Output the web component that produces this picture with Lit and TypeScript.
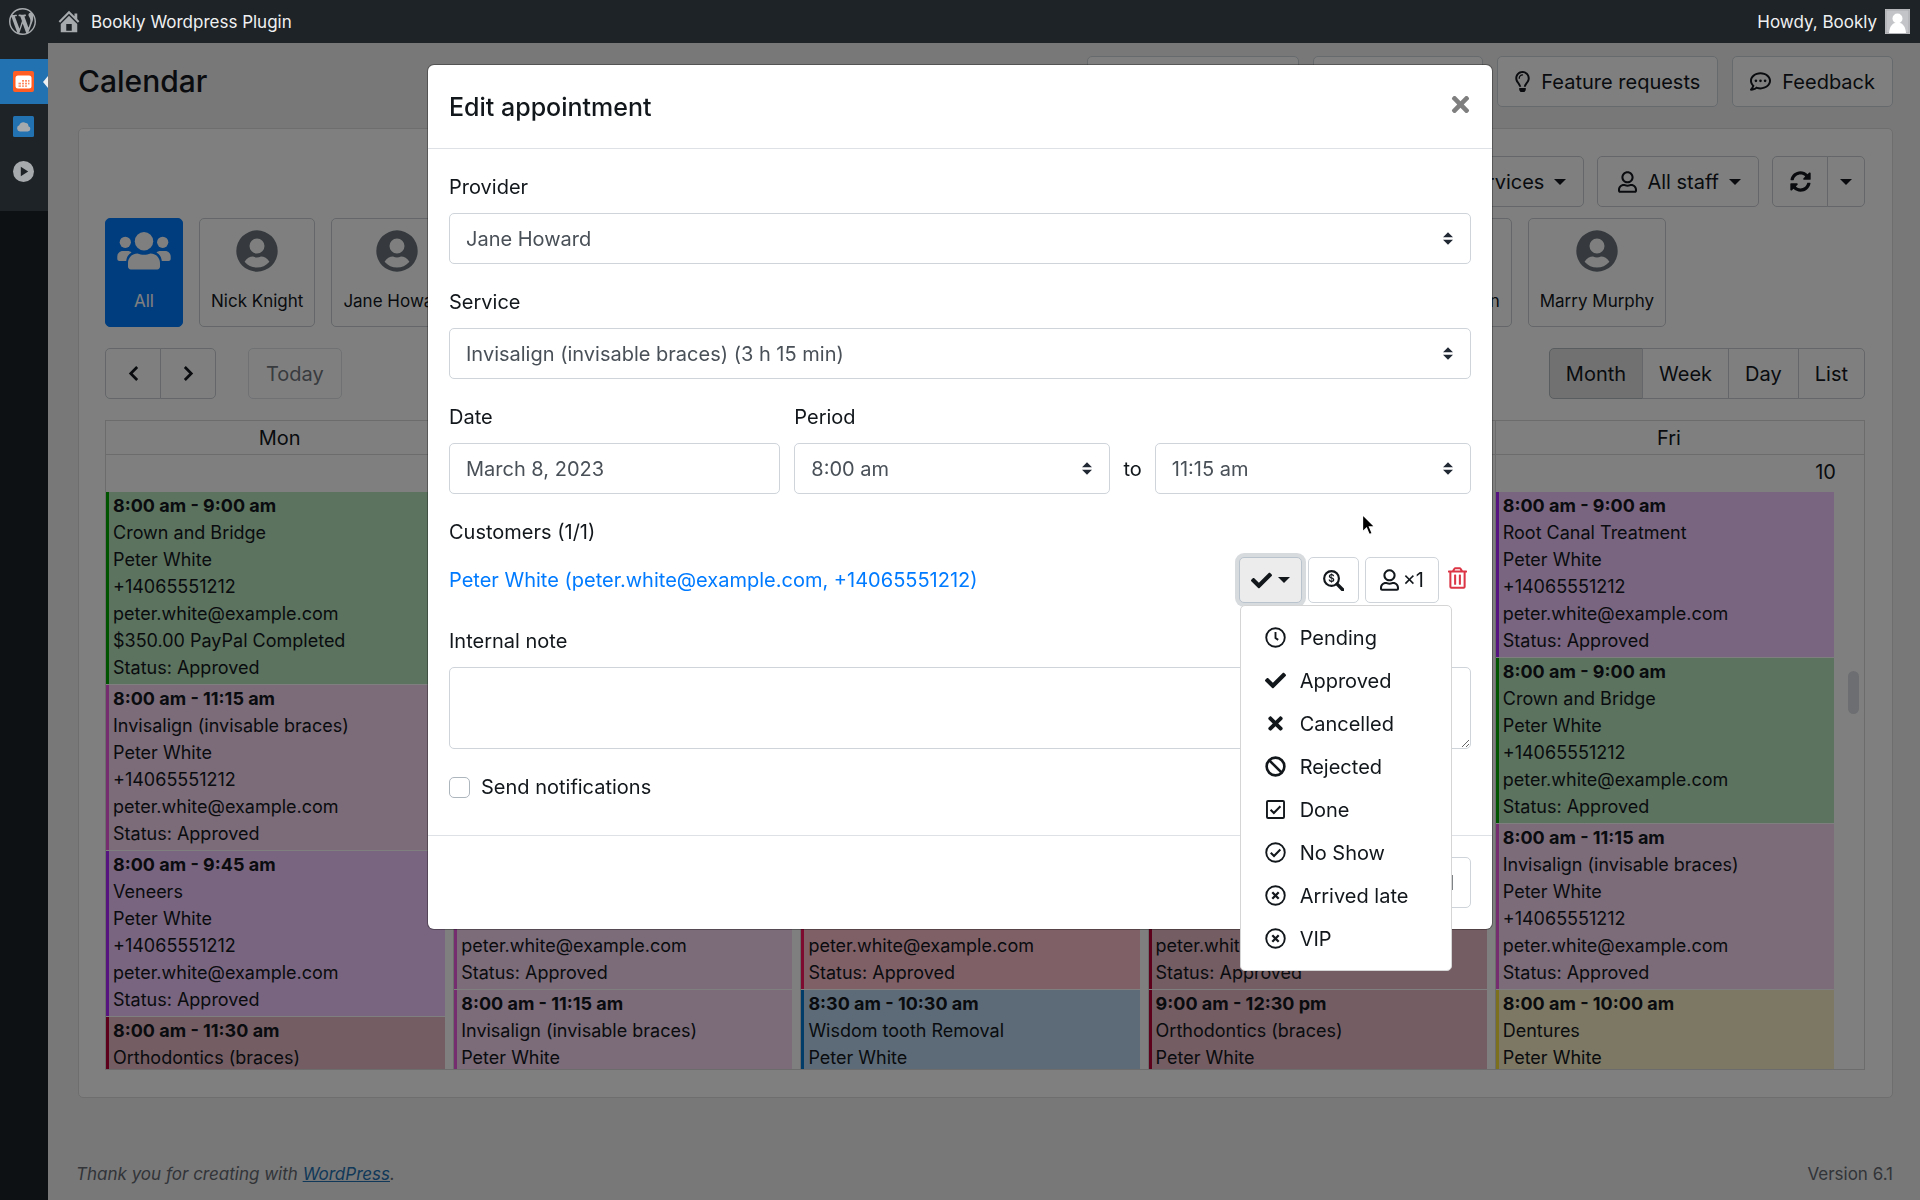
import { LitElement, html, css, svg, nothing, TemplateResult } from "lit";
import { customElement, state } from "lit/decorators.js";
import { classMap } from "lit/directives/class-map.js";

interface Appointment {
  time: string;
  service: string;
  tone: string;
  payment?: string;
}

interface Day {
  name: string;
  date: string;
  items: Appointment[];
}

const icon = (name: string, box: string, body: TemplateResult | unknown) =>
  html`<svg class="icon ${name}" viewBox=${box} aria-hidden="true">${body}</svg>`;

const checkPath = svg`<path d="M173.898 439.404l-166.4-166.4c-9.997-9.997-9.997-26.206 0-36.204l36.203-36.204c9.997-9.998 26.207-9.998 36.204 0L192 312.69 432.095 72.596c9.997-9.997 26.207-9.997 36.204 0l36.203 36.204c9.997 9.997 9.997 26.206 0 36.204l-294.4 294.401c-9.998 9.997-26.207 9.997-36.204-.001z"/>`;
const timesPath = svg`<path d="M242.72 256l100.07-100.07c12.28-12.28 12.28-32.19 0-44.48l-22.24-22.24c-12.28-12.28-32.19-12.28-44.48 0L176 189.28 75.93 89.21c-12.28-12.28-32.19-12.28-44.48 0L9.21 111.45c-12.28 12.28-12.28 32.19 0 44.48L109.28 256 9.21 356.07c-12.28 12.28-12.28 32.19 0 44.48l22.24 22.24c12.28 12.28 32.2 12.28 44.48 0L176 322.72l100.07 100.07c12.28 12.28 32.2 12.28 44.48 0l22.24-22.24c12.28-12.28 12.28-32.19 0-44.48L242.72 256z"/>`;
const userPath = svg`<path d="M313.6 304c-28.7 0-42.5 16-89.6 16-47.1 0-60.8-16-89.6-16C60.2 304 0 364.2 0 438.4V464c0 26.5 21.5 48 48 48h352c26.5 0 48-21.5 48-48v-25.6c0-74.2-60.2-134.4-134.4-134.4zM400 464H48v-25.6c0-47.6 38.8-86.4 86.4-86.4 14.6 0 38.3 16 89.6 16 51.7 0 74.9-16 89.6-16 47.6 0 86.4 38.8 86.4 86.4V464zM224 288c79.5 0 144-64.5 144-144S303.5 0 224 0 80 64.5 80 144s64.5 144 144 144zm0-240c52.9 0 96 43.1 96 96s-43.1 96-96 96-96-43.1-96-96 43.1-96 96-96z"/>`;
const ring = svg`<circle cx="256" cy="256" r="226" fill="none" stroke="currentColor" stroke-width="46"/>`;

const icons = {
  wordpress: () => icon("i-wp", "0 0 20 20", svg`<path d="M20 10c0-5.51-4.49-10-10-10C4.48 0 0 4.49 0 10c0 5.52 4.48 10 10 10 5.51 0 10-4.48 10-10zM7.78 15.37L4.37 6.22c.55-.02 1.17-.08 1.17-.08.5-.06.44-1.13-.06-1.11 0 0-1.45.11-2.37.11-.18 0-.37 0-.58-.01C4.12 2.69 6.87 1.11 10 1.11c2.33 0 4.45.87 6.05 2.34-.68-.11-1.65.39-1.65 1.58 0 .74.45 1.36.9 2.1.35.61.55 1.36.55 2.46 0 1.49-1.4 5-1.4 5l-3.03-8.37c.54-.02.82-.17.82-.17.5-.05.44-1.25-.06-1.22 0 0-1.44.12-2.38.12-.87 0-2.33-.12-2.33-.12-.5-.03-.56 1.2-.06 1.22l.92.08 1.26 3.41zM17.41 10c.24-.64.74-1.87.43-4.25.7 1.29 1.05 2.71 1.05 4.25 0 3.29-1.73 6.24-4.4 7.78.97-2.59 1.94-5.2 2.92-7.78zM6.1 18.09C3.12 16.65 1.11 13.53 1.11 10c0-1.3.23-2.48.72-3.59C3.25 10.3 4.67 14.2 6.1 18.09zm4.03-6.63l2.58 6.98c-.86.29-1.76.45-2.71.45-.79 0-1.57-.11-2.29-.33.81-2.38 1.62-4.74 2.42-7.1z"/>`),
  home: () => icon("i-home", "2 2 16 16.5", svg`<path fill-rule="evenodd" d="M16 8.5l1.53 1.53-1.06 1.06L10 4.6l-6.47 6.49-1.06-1.06L10 2.5l4 4v-2h2v4zm-6-2.46l6 5.99V18H4v-5.97zM12 17v-5H8v5h4z"/>`),
  avatar: () => icon("i-avatar", "0 0 25 25", svg`<rect width="25" height="25" fill="#c3c4c7"/><rect x="1" y="1" width="23" height="23" fill="none" stroke="#a7aaad"/><circle cx="12.500" cy="9.500" r="5" fill="#fff"/><path d="M4 24c.5-6.500 3.500-9.500 6-10h5c2.500.5 5.500 3.500 6 10z" fill="#fff"/>`),
  calendar: () => icon("i-tile", "0 0 21 21", svg`<rect width="21" height="21" rx="2" fill="#ff5d24"/><rect x="2.500" y="4.500" width="16" height="13" rx="2.500" fill="#fff"/><g fill="#ff8a63"><rect x="9" y="9" width="2" height="1.700"/><rect x="12" y="9" width="2" height="1.700"/><rect x="15" y="9" width="1.500" height="1.700"/><rect x="5.500" y="11.700" width="2.500" height="1.700"/><rect x="9" y="11.700" width="2" height="1.700"/><rect x="12" y="11.700" width="2" height="1.700"/><rect x="15" y="11.700" width="1.500" height="1.700"/><rect x="5.500" y="14.400" width="2.500" height="1.400"/><rect x="9" y="14.400" width="2" height="1.400"/><rect x="12" y="14.400" width="2" height="1.400"/></g>`),
  cloud: () => icon("i-tile", "0 0 21 21", svg`<rect width="21" height="21" rx="1.500" fill="#2271b1"/><path d="M7 15.500a3.200 3.200 0 0 1-.8-6.200A4.300 4.300 0 0 1 12.800 7a3 3 0 0 1 2.600 3.200 2.700 2.700 0 0 1-.6 5.300z" fill="#a7aaad"/>`),
  play: () => icon("i-tile", "0 0 21 21", svg`<circle cx="10.500" cy="10.500" r="10.500" fill="#a7aaad"/><path d="M7.800 5.800v9.400l7.400-4.700z" fill="#1d2327"/>`),
  bulb: () => icon("i-bulb", "0 0 352 512", svg`<path d="M176 80c-52.94 0-96 43.06-96 96 0 8.840 7.160 16 16 16s16-7.160 16-16c0-35.300 28.720-64 64-64 8.840 0 16-7.160 16-16s-7.160-16-16-16zM96.060 459.170c0 3.150.93 6.220 2.680 8.840l24.510 36.840c2.970 4.460 7.970 7.140 13.320 7.140h78.850c5.360 0 10.360-2.680 13.320-7.140l24.510-36.840c1.740-2.620 2.670-5.700 2.680-8.840l.05-43.180H96.020l.04 43.180zM176 0C73.720 0 0 82.970 0 176c0 44.370 16.450 84.850 43.560 115.780 16.640 18.990 42.740 58.800 52.420 92.160v.06h48v-.12c-.01-4.770-.72-9.510-2.150-14.070-5.590-17.810-22.820-64.770-62.170-109.670-20.540-23.430-31.520-53.150-31.610-84.140-.2-73.640 59.670-128 127.950-128 70.580 0 128 57.420 128 128 0 30.970-11.240 60.850-31.650 84.140-39.110 44.610-56.420 91.470-62.100 109.460a47.507 47.507 0 0 0-2.220 14.300v.1h48v-.05c9.680-33.370 35.780-73.180 52.420-92.160C335.550 260.850 352 220.370 352 176 352 78.800 273.200 0 176 0z"/>`),
  comment: () => icon("i-21", "0 0 512 512", svg`<circle cx="144" cy="240" r="32"/><circle cx="256" cy="240" r="32"/><circle cx="368" cy="240" r="32"/><path d="M256 32C114.600 32 0 125.100 0 240c0 47.600 19.900 91.200 52.900 126.300C38 405.700 7 439.100 6.500 439.500c-6.600 7-8.400 17.200-4.600 26S14.400 480 24 480c61.500 0 110-25.700 139.100-46.300C192 442.800 223.200 448 256 448c141.400 0 256-93.100 256-208S397.400 32 256 32zm0 368c-26.700 0-53.100-4.100-78.400-12.100l-22.700-7.200-19.500 13.800c-14.300 10.100-33.900 21.400-57.500 29 7.300-12.100 14.400-25.700 19.900-40.200l10.600-28.100-20.600-21.800C69.700 314.100 48 282.200 48 240c0-88.200 93.300-160 208-160s208 71.800 208 160-93.300 160-208 160z"/>`),
  user: () => icon("i-user", "0 0 448 512", userPath),
  sync: () => icon("i-21", "0 0 512 512", svg`<path d="M370.720 133.280C339.458 104.008 298.888 87.962 255.848 88c-77.458.068-144.328 53.178-162.791 126.850-1.344 5.363-6.122 9.150-11.651 9.150H24.103c-7.498 0-13.194-6.807-11.807-14.176C33.933 94.924 134.813 8 256 8c66.448 0 126.791 26.136 171.315 68.685L463.030 40.970C478.149 25.851 504 36.559 504 57.941V192c0 13.255-10.745 24-24 24H345.941c-21.382 0-32.090-25.851-16.971-40.971l41.750-41.749zM32 296h134.059c21.382 0 32.090 25.851 16.971 40.971l-41.750 41.750c31.262 29.273 71.835 45.319 114.876 45.280 77.418-.07 144.315-53.144 162.787-126.849 1.344-5.363 6.122-9.150 11.651-9.150h57.304c7.498 0 13.194 6.807 11.807 14.176C478.067 417.076 377.187 504 256 504c-66.448 0-126.791-26.136-171.315-68.685L48.970 471.030C33.851 486.149 8 475.441 8 454.059V320c0-13.255 10.745-24 24-24z"/>`),
  people: () => icon("i-people", "0 0 54 38", svg`<circle cx="27" cy="9.300" r="9.200"/><circle cx="8.300" cy="10.300" r="5.600"/><circle cx="45.700" cy="10.300" r="5.600"/><path d="M11 34.500V31c0-5.200 4.200-9.500 9.400-9.500 2.300 1 4.300 1.300 6.600 1.300s4.300-.3 6.600-1.300c5.200 0 9.400 4.300 9.400 9.500v3.500c0 1.600-1.200 2.900-2.800 2.900H13.800c-1.600 0-2.800-1.300-2.800-2.900z"/><path d="M.3 27v-2.500c0-3 2.500-5.500 5.500-5.500h5c1.400 0 2.700.6 3.700 1.400-3 1.600-4.900 4.600-5.300 8.600H2.500c-1.200 0-2.200-.9-2.200-2z"/><path transform="matrix(-1 0 0 1 54 0)" d="M.3 27v-2.500c0-3 2.500-5.500 5.500-5.500h5c1.400 0 2.700.6 3.700 1.400-3 1.600-4.900 4.600-5.300 8.600H2.500c-1.200 0-2.200-.9-2.200-2z"/>`),
  person: () => icon("i-person", "0 0 42 42", svg`<path fill-rule="evenodd" d="M21 .3a20.700 20.700 0 1 0 0 41.400 20.700 20.700 0 0 0 0-41.400zM21 8.500a7.500 7.500 0 1 1 0 15 7.500 7.500 0 0 1 0-15zM8.600 31.700C10.500 28.300 14 26.500 17 26.500c2.700 1.200 5.300 1.200 8 0 3 0 6.500 1.800 8.400 5.200C30 35.600 25.700 37.600 21 37.600s-9-2-12.400-5.900z"/>`),
  left: () => icon("i-chevron", "0 0 12 18", svg`<path d="M10 2L3 9l7 7" fill="none" stroke="currentColor" stroke-width="3"/>`),
  right: () => icon("i-chevron", "0 0 12 18", svg`<path d="M2 2l7 7-7 7" fill="none" stroke="currentColor" stroke-width="3"/>`),
  check: () => icon("i-21", "0 0 512 512", checkPath),
  times: () => icon("i-21", "-80 0 512 512", timesPath),
  clock: () => icon("i-21", "0 0 512 512", svg`${ring}<path d="M256 120v146l66 48" fill="none" stroke="currentColor" stroke-width="46"/>`),
  ban: () => icon("i-21", "0 0 512 512", svg`<circle cx="256" cy="256" r="216" fill="none" stroke="currentColor" stroke-width="64"/><path d="M105 105l302 302" fill="none" stroke="currentColor" stroke-width="64"/>`),
  checkSquare: () => icon("i-21", "0 0 512 512", svg`<rect x="48" y="48" width="416" height="416" rx="26" fill="none" stroke="currentColor" stroke-width="46"/><path d="M136 262l80 80 160-164" fill="none" stroke="currentColor" stroke-width="50"/>`),
  checkCircle: () => icon("i-21", "0 0 512 512", svg`${ring}<path d="M140 262l80 80 154-158" fill="none" stroke="currentColor" stroke-width="50"/>`),
  timesCircle: () => icon("i-21", "0 0 512 512", svg`${ring}<path d="M178 178l156 156M334 178L178 334" fill="none" stroke="currentColor" stroke-width="56"/>`),
  searchDollar: () => icon("i-21", "0 0 512 512", svg`<circle cx="208" cy="208" r="180" fill="none" stroke="currentColor" stroke-width="52"/><path d="M345 345l135 135" stroke="currentColor" stroke-width="84" stroke-linecap="round"/><text x="208" y="292" class="coin" text-anchor="middle">$</text>`),
  trash: () => icon("i-trash", "0 0 448 512", svg`<path d="M268 416h24a12 12 0 0 0 12-12V188a12 12 0 0 0-12-12h-24a12 12 0 0 0-12 12v216a12 12 0 0 0 12 12zM432 80h-82.410l-34-56.700A48 48 0 0 0 274.410 0H173.590a48 48 0 0 0-41.160 23.300L98.410 80H16A16 16 0 0 0 0 96v16a16 16 0 0 0 16 16h16v336a48 48 0 0 0 48 48h288a48 48 0 0 0 48-48V128h16a16 16 0 0 0 16-16V96a16 16 0 0 0-16-16zM171.840 50.910A6 6 0 0 1 177 48h94a6 6 0 0 1 5.150 2.910L293.610 80H154.390zM368 464H80V128h288zm-212-48h24a12 12 0 0 0 12-12V188a12 12 0 0 0-12-12h-24a12 12 0 0 0-12 12v216a12 12 0 0 0 12 12z"/>`),
  sort: () => icon("i-sort", "0 0 4 5", svg`<path d="M2 0L0 2h4zm0 5L0 3h4z"/>`),
  pointer: () => icon("i-pointer", "0 0 16 24", svg`<path d="M1.500 1.500v17.500l4-3.800 2.800 6.500 3-1.300-2.800-6.400h5.500z" fill="#000" stroke="#fff" stroke-width="1.300"/>`),
};

const invisalign: Appointment = { time: "8:00 am - 11:15 am", service: "Invisalign (invisable braces)", tone: "orchid" };

const days: Day[] = [
  {
    name: "Mon", date: "6", items: [
      { time: "8:00 am - 9:00 am", service: "Crown and Bridge", tone: "green", payment: "$350.00 PayPal Completed" },
      invisalign,
      { time: "8:00 am - 9:45 am", service: "Veneers", tone: "violet" },
      { time: "8:00 am - 11:30 am", service: "Orthodontics (braces)", tone: "crimson" },
    ],
  },
  {
    name: "Tue", date: "7", items: [
      { time: "8:00 am - 9:00 am", service: "Crown and Bridge", tone: "green" },
      { time: "8:00 am - 9:45 am", service: "Veneers", tone: "violet" },
      invisalign,
      invisalign,
    ],
  },
  {
    name: "Wed", date: "8", items: [
      invisalign,
      { time: "8:00 am - 9:45 am", service: "Veneers", tone: "violet" },
      { time: "8:00 am - 10:00 am", service: "Teeth Whitening", tone: "rose" },
      { time: "8:30 am - 10:30 am", service: "Wisdom tooth Removal", tone: "blue" },
    ],
  },
  {
    name: "Thu", date: "9", items: [
      { time: "8:00 am - 9:00 am", service: "Crown and Bridge", tone: "green" },
      invisalign,
      { time: "8:00 am - 11:30 am", service: "Orthodontics (braces)", tone: "crimson" },
      { time: "9:00 am - 12:30 pm", service: "Orthodontics (braces)", tone: "crimson" },
    ],
  },
  {
    name: "Fri", date: "10", items: [
      { time: "8:00 am - 9:00 am", service: "Root Canal Treatment", tone: "violet" },
      { time: "8:00 am - 9:00 am", service: "Crown and Bridge", tone: "green" },
      invisalign,
      { time: "8:00 am - 10:00 am", service: "Dentures", tone: "yellow" },
    ],
  },
];

const staff = ["Nick Knight", "Jane Howard", "Ashley Stamp", "Bradley Tannen", "Wayne Turner", "Emily Taylor", "Hugh Canberg", "Hilda Burgess", "Jodi Warren", "Marry Murphy"];

const statuses: Array<[string, () => TemplateResult]> = [
  ["Pending", icons.clock],
  ["Approved", icons.check],
  ["Cancelled", icons.times],
  ["Rejected", icons.ban],
  ["Done", icons.checkSquare],
  ["No Show", icons.checkCircle],
  ["Arrived late", icons.timesCircle],
  ["VIP", icons.timesCircle],
];

const base = css`
  *, *::before, *::after { box-sizing: border-box; }
  :host { font-family: Inter, "Liberation Sans", sans-serif; font-size: 20px; line-height: 32px; color: #12171c; }
  button, input, select, textarea { font: inherit; color: inherit; margin: 0; }
  button { cursor: pointer; }
  h1, h2, p { margin: 0; }
  .icon { display: block; flex: none; fill: currentColor; }
  .i-21 { width: 21px; height: 21px; }
  .i-user { width: 19px; height: 22px; }
  .i-bulb { width: 15px; height: 21px; }
  .i-wp { width: 27px; height: 27px; }
  .i-home { width: 22px; height: 23px; }
  .i-avatar { width: 25px; height: 25px; }
  .i-tile { width: 21px; height: 21px; }
  .i-people { width: 54px; height: 38px; }
  .i-person { width: 42px; height: 42px; }
  .i-chevron { width: 11px; height: 17px; }
  .i-trash { width: 19px; height: 22px; }
  .i-sort { width: 10px; height: 13px; }
  .i-pointer { width: 16px; height: 24px; }
  .caret { width: 0; height: 0; border: 6px solid transparent; border-top: 6px solid currentColor; border-bottom: 0; }
  .btn {
    display: inline-flex; align-items: center; justify-content: center; gap: 11px;
    height: 51px; padding: 0 17px; border: 1px solid #ced4da; border-radius: 5px;
    background: #fff; white-space: nowrap;
  }
`;

@customElement("edit-appointment")
export class EditAppointment extends LitElement {
  @state() private menuOpen = true;
  @state() private status = "Approved";

  static styles = [base, css`
    :host { display: block; }
    .modal { position: relative; background: #fff; border-radius: 6px; box-shadow: 0 0 0 1px rgba(0, 0, 0, 0.3); }
    .head { display: flex; align-items: center; justify-content: space-between; height: 84px; padding: 0 23px 0 21px; border-bottom: 1px solid #dee2e6; }
    .title { font-size: 25px; font-weight: 500; line-height: 38px; }
    .close { display: flex; padding: 0 0 4px; border: 0; background: none; color: #7f7f7f; }
    .close .icon { width: 25px; height: 25px; margin-right: -4px; }
    .body { display: flex; flex-direction: column; gap: 22px; padding: 22px 21px 32px; }
    .field { display: flex; flex-direction: column; gap: 10px; min-width: 0; }
    .label { display: block; }
    .control { display: block; width: 100%; height: 51px; padding: 0 16px; border: 1px solid #ced4da; border-radius: 5px; background: #fff; color: #495057; appearance: none; outline: none; }
    .picker { display: grid; align-items: center; }
    .picker > * { grid-area: 1 / 1; }
    .picker .icon { justify-self: end; margin-right: 18px; color: #212934; pointer-events: none; }
    .dates { display: grid; grid-template-columns: 331fr 676fr; gap: 14px; }
    .range { display: grid; grid-template-columns: 1fr auto 1fr; align-items: center; gap: 13px; }
    .customers { gap: 9px; }
    .customer { display: flex; align-items: center; justify-content: space-between; }
    .link { color: #007bff; text-decoration: none; }
    .actions { display: flex; align-items: center; gap: 6px; }
    .btn.small { height: 46px; padding: 0 14px; gap: 4px; }
    .status { position: relative; }
    .btn.toggle { padding: 0 11px; gap: 6px; background: #ececec; border-color: #b9c3cd; box-shadow: 0 0 0 4px #d8dbde; }
    .trash { display: flex; padding: 0 4px 4px 3px; border: 0; background: none; color: #dc3545; }
    .menu {
      position: absolute; z-index: 5; top: 48px; left: 1px; width: 212px; margin: 0; padding: 10px 0;
      border: 1px solid #d5d5d5; border-radius: 5px; background: #fff; list-style: none;
    }
    .item { display: flex; align-items: center; gap: 14px; width: 100%; height: 43px; padding: 0 24px; border: 0; background: none; text-align: left; white-space: nowrap; }
    .note { height: 82px; padding: 8px 16px; resize: vertical; }
    .tick { display: flex; align-items: center; gap: 11px; }
    .box { width: 21px; height: 21px; border: 1px solid #adb5bd; border-radius: 5px; background: #fff; appearance: none; }
    .foot { display: flex; justify-content: flex-end; gap: 12px; padding: 21px; border-top: 1px solid #dee2e6; }
    .foot .btn { padding: 0 16px; }
    .coin { font: 700 240px Inter, sans-serif; }
    .pointer { position: absolute; left: 933px; top: 448px; }
  `];

  private pick(name: string) {
    this.status = name;
    this.menuOpen = false;
  }

  private picker(id: string, options: string[], label?: string) {
    return html`<div class="picker">
      <select class="control" id=${id} aria-label=${label ?? nothing}>${options.map((o) => html`<option>${o}</option>`)}</select>
      ${icons.sort()}
    </div>`;
  }

  render() {
    const current = statuses.find(([name]) => name === this.status)!;
    return html`
      <div class="modal" role="dialog" aria-labelledby="title">
        <header class="head">
          <h2 class="title" id="title">Edit appointment</h2>
          <button class="close" aria-label="Close">${icons.times()}</button>
        </header>
        <div class="body">
          <div class="field"><label class="label" for="provider">Provider</label>${this.picker("provider", ["Jane Howard", "Nick Knight"])}</div>
          <div class="field"><label class="label" for="service">Service</label>${this.picker("service", ["Invisalign (invisable braces) (3 h 15 min)", "Veneers"])}</div>
          <div class="dates">
            <div class="field"><label class="label" for="date">Date</label><input class="control" id="date" type="text" value="March 8, 2023"></div>
            <div class="field">
              <label class="label" for="start">Period</label>
              <div class="range">${this.picker("start", ["8:00 am", "9:00 am"])}<span>to</span>${this.picker("end", ["11:15 am", "12:15 pm"], "End time")}</div>
            </div>
          </div>
          <div class="field customers">
            <span class="label">Customers (1/1)</span>
            <div class="customer">
              <a class="link" href="#customer">Peter White (peter.white@example.com, +14065551212)</a>
              <div class="actions">
                <div class="status">
                  <button class="btn small toggle" aria-label="Status" aria-expanded=${this.menuOpen} @click=${() => (this.menuOpen = !this.menuOpen)}>${current[1]()}<span class="caret"></span></button>
                  ${this.menuOpen
                    ? html`<ul class="menu">${statuses.map(([name, glyph]) => html`<li><button class="item" @click=${() => this.pick(name)}>${glyph()}<span>${name}</span></button></li>`)}</ul>`
                    : nothing}
                </div>
                <button class="btn small" aria-label="Payment details">${icons.searchDollar()}</button>
                <button class="btn small">${icons.user()}<span>×1</span></button>
                <button class="trash" aria-label="Remove customer">${icons.trash()}</button>
              </div>
            </div>
          </div>
          <div class="field"><label class="label" for="note">Internal note</label><textarea class="control note" id="note"></textarea></div>
          <div class="tick"><input class="box" id="notify" type="checkbox"><label for="notify">Send notifications</label></div>
        </div>
        <footer class="foot"><button class="btn">Cancel</button></footer>
        <div class="pointer">${icons.pointer()}</div>
      </div>
    `;
  }
}

@customElement("app-root")
export class AppRoot extends LitElement {
  @state() private view = "Month";

  static styles = [base, css`
    :host { display: flex; flex-direction: column; height: 100vh; min-height: 1000px; background: #f0f0f1; }
    .bar { position: relative; z-index: 3; display: flex; align-items: center; justify-content: space-between; height: 43px; padding: 0 10px 0 9px; background: #1d2327; color: #f0f0f1; font-size: 17px; }
    .site, .account { display: flex; align-items: center; color: inherit; text-decoration: none; }
    .site { gap: 11px; }
    .account { gap: 8px; }
    .brand { display: flex; align-items: center; gap: 22px; }
    .bar .i-wp, .bar .i-home { color: #a7aaad; }
    .shell { display: flex; flex: 1; min-height: 0; }
    .side { width: 48px; background: #1d2327; }
    .nav { position: relative; z-index: 3; padding: 16px 0 17px; background: #1d2327; }
    .tab { display: flex; align-items: center; height: 45px; padding-left: 13px; }
    .tab.active { justify-content: space-between; background: #2271b1; }
    .tab.active::after { content: ""; border: 6px solid transparent; border-right: 5px solid #f0f0f1; border-left: 0; }
    .main { display: flex; flex: 1; flex-direction: column; min-width: 0; padding: 13px 27px 0 30px; }
    .top { display: flex; align-items: center; justify-content: space-between; margin-bottom: 21px; }
    .heading { font-size: 30px; font-weight: 500; line-height: 51px; }
    .tools { display: flex; gap: 14px; }
    .card { display: flex; flex: 1; flex-direction: column; min-height: 0; padding: 27px 27px 27px 26px; border: 1px solid #dcdcde; border-radius: 5px; background: #fff; }
    .card .btn { border-color: #c8ccd2; }
    .filters { display: flex; justify-content: flex-end; gap: 13px; margin-bottom: 11px; }
    .group { display: flex; }
    .group .btn { border-radius: 0; margin-left: -1px; }
    .group .btn:first-child { border-radius: 5px 0 0 5px; margin-left: 0; }
    .group .btn:last-child { border-radius: 0 5px 5px 0; }
    .btn.drop { gap: 10px; padding: 0 17px 0 20px; }
    .btn.split { padding: 0 12px; }
    .btn.view { padding: 0 16px; }
    .people { display: flex; gap: 16px; margin-bottom: 21px; }
    .member { display: flex; flex-direction: column; align-items: center; justify-content: space-between; height: 109px; padding: 11px 11px 9px; border: 1px solid #c8ccd2; border-radius: 5px; background: #fff; font-size: 17px; white-space: nowrap; }
    .member .icon { color: #6c757d; }
    .member.all { padding: 13px 11px 9px; border-color: #007bff; background: #007bff; color: #fff; }
    .member.all .icon { color: #fff; }
    .period { display: flex; justify-content: space-between; margin-bottom: 21px; }
    .move { display: flex; gap: 32px; }
    .step { width: 56px; }
    .btn.today { border-color: #dee2e6; color: #70767c; }
    .btn.on { background: #e2e2e2; border-color: #b4bac0; }
    .calendar { position: relative; display: flex; flex: 1; min-height: 0; border: 1px solid #d8d8d8; }
    .scroll { flex: 1; overflow-y: auto; scrollbar-width: none; }
    .grid { width: 100%; table-layout: fixed; border-spacing: 0; }
    .gutter { width: 22px; }
    .grid th { height: 34px; padding: 2px 0 0; border-bottom: 1px solid #d8d8d8; font-weight: 400; line-height: 31px; }
    .grid th + th, .grid td + td { border-left: 1px solid #d8d8d8; }
    .grid th.pad, .grid td.pad { border-left: 0; }
    .grid td { padding: 0; vertical-align: top; }
    .date { height: 37px; padding-right: 6px; line-height: 34px; text-align: right; }
    .event { margin: 0 8px 1px 0; padding: 0 4px 3px; border-left: 3px solid; font-size: 18px; line-height: 27px; white-space: nowrap; overflow: hidden; }
    .time { font-weight: 700; }
    .text { color: #12171c; }
    .green { background: #b8e6be; border-color: #00a800; }
    .orchid { background: #f8d6f2; border-color: #ea5ae0; }
    .violet { background: #f2cafe; border-color: #aa28ff; }
    .crimson { background: #e8bac6; border-color: #b80036; }
    .rose { background: #fec0ce; border-color: #ff1460; }
    .blue { background: #bad6f0; border-color: #0078d2; }
    .yellow { background: #faf0c6; border-color: #f8e03c; }
    .thumb { position: absolute; top: 250px; right: 5px; width: 11px; height: 43px; border-radius: 6px; background: #dadce2; }
    .credits { display: flex; justify-content: space-between; align-items: center; height: 102px; margin-left: -2px; padding-top: 50px; color: #646970; font-size: 17px; }
    .credits a { color: #2271b1; }
    .veil { position: fixed; z-index: 2; inset: 0; background: rgba(0, 0, 0, 0.5); }
    .layer { position: fixed; z-index: 4; inset: 65px 0 auto; display: flex; justify-content: center; }
    .dialog { width: 1064px; max-width: 94vw; }
  `];

  private event(e: Appointment) {
    return html`<div class="event ${e.tone}"><div class="text">
      <div class="time">${e.time}</div>
      <div>${e.service}</div>
      <div>Peter White</div>
      <div>+14065551212</div>
      <div>peter.white@example.com</div>
      ${e.payment ? html`<div>${e.payment}</div>` : nothing}
      <div>Status: Approved</div>
    </div></div>`;
  }

  render() {
    return html`
      <header class="bar">
        <div class="brand">${icons.wordpress()}<a class="site" href="#site">${icons.home()}<span>Bookly Wordpress Plugin</span></a></div>
        <a class="account" href="#account"><span>Howdy, Bookly</span>${icons.avatar()}</a>
      </header>
      <div class="shell">
        <aside class="side">
          <nav class="nav">
            <a class="tab active" href="#calendar" aria-label="Calendar">${icons.calendar()}</a>
            <a class="tab" href="#cloud" aria-label="Cloud">${icons.cloud()}</a>
            <a class="tab" href="#collapse" aria-label="Collapse menu">${icons.play()}</a>
          </nav>
        </aside>
        <main class="main">
          <div class="top">
            <h1 class="heading">Calendar</h1>
            <div class="tools">
              <button class="btn">${icons.comment()}Documentation</button>
              <button class="btn">${icons.comment()}Contact us</button>
              <button class="btn">${icons.bulb()}Feature requests</button>
              <button class="btn">${icons.comment()}Feedback</button>
            </div>
          </div>
          <section class="card">
            <div class="filters">
              <button class="btn drop">All services<span class="caret"></span></button>
              <button class="btn drop">${icons.user()}All staff<span class="caret"></span></button>
              <div class="group">
                <button class="btn step" aria-label="Refresh">${icons.sync()}</button>
                <button class="btn split" aria-label="Refresh options"><span class="caret"></span></button>
              </div>
            </div>
            <div class="people">
              <button class="member all">${icons.people()}<span>All</span></button>
              ${staff.map((name) => html`<button class="member">${icons.person()}<span>${name}</span></button>`)}
            </div>
            <div class="period">
              <div class="move">
                <div class="group">
                  <button class="btn step" aria-label="Previous">${icons.left()}</button>
                  <button class="btn step" aria-label="Next">${icons.right()}</button>
                </div>
                <button class="btn today">Today</button>
              </div>
              <div class="group">
                ${["Month", "Week", "Day", "List"].map((v) => html`<button class=${classMap({ btn: true, view: true, on: v === this.view })} @click=${() => (this.view = v)}>${v}</button>`)}
              </div>
            </div>
            <div class="calendar">
              <div class="scroll">
                <table class="grid">
                  <colgroup>${days.map(() => html`<col>`)}<col class="gutter"></colgroup>
                  <thead><tr>${days.map((d) => html`<th scope="col">${d.name}</th>`)}<th class="pad"></th></tr></thead>
                  <tbody><tr>
                    ${days.map((d) => html`<td><div class="date">${d.date}</div>${d.items.map((e) => this.event(e))}</td>`)}
                    <td class="pad"></td>
                  </tr></tbody>
                </table>
              </div>
              <div class="thumb"></div>
            </div>
          </section>
          <footer class="credits">
            <em>Thank you for creating with <a href="#wordpress">WordPress</a>.</em>
            <span>Version 6.1</span>
          </footer>
        </main>
      </div>
      <div class="veil"></div>
      <div class="layer"><edit-appointment class="dialog"></edit-appointment></div>
    `;
  }
}
